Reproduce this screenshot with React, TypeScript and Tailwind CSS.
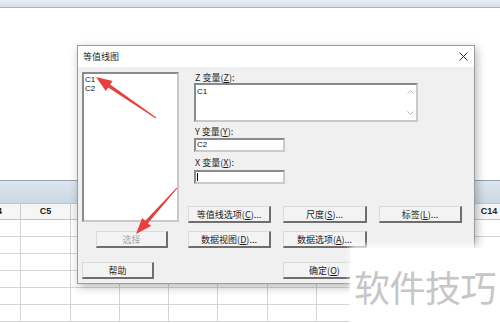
import React from 'react';

const cols = ['C4', 'C5', 'C6', 'C7', 'C8', 'C9', 'C10', 'C11', 'C12', 'C13', 'C14'];
const FONT = { fontFamily: '"Noto Sans CJK SC", "Liberation Sans", sans-serif' };

// mnemonic letter, underlined like a Windows accelerator key
function Key({ k }: { k: string }) {
  return (
    <>
      (<span className="underline underline-offset-1">{k}</span>)
    </>
  );
}

function Btn({
  children,
  w = 'w-[83px]',
  disabled = false,
}: {
  children: React.ReactNode;
  w?: string;
  disabled?: boolean;
}) {
  return (
    <div
      className={`${w} h-[17px] flex items-center justify-center bg-[#f3f3f3] border-t border-l border-[#dadada] border-r-2 border-b-2 border-r-[#6e6e6e] border-b-[#6e6e6e] text-[9px] leading-none ${
        disabled ? 'text-[#a6a6a6]' : 'text-[#1b1b1b]'
      }`}
    >
      {children}
    </div>
  );
}

function Sunken({ className, children }: { className: string; children?: React.ReactNode }) {
  return (
    <div
      className={`bg-white border-2 border-t-[#8a8a8a] border-l-[#8a8a8a] border-b-[#c9c9c9] border-r-[#c9c9c9] ${className}`}
    >
      {children}
    </div>
  );
}

function Sheet() {
  return (
    <div className="flex flex-col w-[500px] h-[323px] bg-white">
      <div className="h-[8px] bg-gradient-to-b from-[#e8eef5] to-[#d6dfea] border-b border-[#a9b4c1]" />
      <div className="h-[172px] bg-white" />
      <div className="h-[23px] bg-gradient-to-b from-[#dde6ef] to-[#cbd7e3] border-t border-[#97a3b1]" />
      <div className="flex ml-[-28px] h-[17px] bg-[#f6f6f6] border-t border-b border-[#c4c4c4]">
        {cols.map(c => (
          <div
            key={c}
            className="w-[49.3px] shrink-0 border-r border-[#cdcdcd] flex items-center justify-center text-[9px] font-bold text-[#222]"
            style={{ fontFamily: '"Liberation Sans", sans-serif' }}
          >
            {c}
          </div>
        ))}
      </div>
      {[0, 1, 2, 3, 4, 5].map(r => (
        <div key={r} className="flex ml-[-28px] h-[17px] border-b border-[#d4d4d4]">
          {cols.map(c => (
            <div key={c} className="w-[49.3px] shrink-0 border-r border-[#d4d4d4]" />
          ))}
        </div>
      ))}
    </div>
  );
}

function Dialog() {
  return (
    <div
      className="absolute left-[77px] top-[45px] w-[398px] h-[239px] flex flex-col border border-[#9c9c9c] bg-[#f0f0f0] shadow-[2px_3px_9px_rgba(0,0,0,0.28)]"
      style={FONT}
    >
      <div className="h-[21px] bg-white flex items-center justify-between pl-[5px] pr-[6px]">
        <span className="text-[9px] leading-none text-[#1e1e1e]">等值线图</span>
        <svg width="9" height="9" viewBox="0 0 9 9">
          <path d="M0.5 0.5 L8.5 8.5 M8.5 0.5 L0.5 8.5" stroke="#333" strokeWidth="1" />
        </svg>
      </div>

      <div className="flex-1 flex pl-[4px] pt-[5px]">
        {/* left: variable list */}
        <div className="w-[97px] flex flex-col">
          <Sunken className="h-[150px] px-[1px] pt-[1px]">
            <div className="text-[8px] leading-[9px] text-[#111]" style={{ fontFamily: '"Liberation Sans", sans-serif' }}>
              <div>C1</div>
              <div>C2</div>
            </div>
          </Sunken>
          <div className="mt-[9px] ml-[14px]">
            <Btn w="w-[72px]" disabled>
              选择
            </Btn>
          </div>
          <div className="mt-[14px]">
            <Btn w="w-[72px]">帮助</Btn>
          </div>
        </div>

        {/* right: fields and option buttons */}
        <div className="ml-[9px] flex flex-col">
          <div className="ml-[7px] h-[11px] text-[9px] leading-[11px] text-[#1e1e1e]">
            Z 变量<Key k="Z" />:
          </div>
          <Sunken className="ml-[6px] w-[224px] h-[39px] flex justify-between">
            <div className="text-[8px] leading-[10px] pl-[1px] pt-[2px] text-[#111]" style={{ fontFamily: '"Liberation Sans", sans-serif' }}>
              C1
            </div>
            <div className="w-[12px] flex flex-col justify-between items-center py-[5px] text-[#b4b4b4]">
              <svg width="7" height="4" viewBox="0 0 7 4">
                <path d="M0.5 3.5 L3.5 0.5 L6.5 3.5" fill="none" stroke="currentColor" />
              </svg>
              <svg width="7" height="4" viewBox="0 0 7 4">
                <path d="M0.5 0.5 L3.5 3.5 L6.5 0.5" fill="none" stroke="currentColor" />
              </svg>
            </div>
          </Sunken>
          <div className="ml-[7px] mt-[4px] h-[12px] text-[9px] leading-[12px] text-[#1e1e1e]">
            Y 变量<Key k="Y" />:
          </div>
          <Sunken className="ml-[6px] w-[91px] h-[14px]">
            <div className="text-[8px] leading-[10px] pl-[1px] text-[#111]" style={{ fontFamily: '"Liberation Sans", sans-serif' }}>
              C2
            </div>
          </Sunken>
          <div className="ml-[7px] mt-[5px] h-[12px] text-[9px] leading-[12px] text-[#1e1e1e]">
            X 变量<Key k="X" />:
          </div>
          <Sunken className="ml-[6px] mt-[1px] w-[91px] h-[14px] pl-[1px] pt-[1px]">
            <div className="w-px h-[8px] bg-black" />
          </Sunken>

          <div className="mt-[22px] flex gap-[12px]">
            <Btn>
              等值线选项<Key k="C" />...
            </Btn>
            <Btn w="w-[84px]">
              尺度<Key k="S" />...
            </Btn>
            <Btn>
              标签<Key k="L" />...
            </Btn>
          </div>
          <div className="mt-[8px] flex gap-[12px]">
            <Btn>
              数据视图<Key k="D" />...
            </Btn>
            <Btn w="w-[84px]">
              数据选项<Key k="A" />...
            </Btn>
          </div>
          <div className="mt-[14px] flex pl-[95px]">
            <Btn w="w-[84px]">
              确定<Key k="O" />
            </Btn>
          </div>
        </div>
      </div>
    </div>
  );
}

function Arrows() {
  return (
    <svg className="absolute left-0 top-0 pointer-events-none" width="500" height="323" viewBox="0 0 500 323">
      <polygon
        fill="#e8413b"
        points="96,77 112.6,81.1 110.2,84.5 156.3,117.6 155.7,118.4 108.2,87.5 105.8,90.9"
      />
      <polygon
        fill="#e8413b"
        points="136,234 142.1,218 145.3,220.8 176.6,187.7 177.4,188.3 147.9,223.2 151.1,226"
      />
    </svg>
  );
}

export default function App() {
  return (
    <div className="relative w-[500px] h-[323px] overflow-hidden bg-white">
      <Sheet />
      <Dialog />
      <Arrows />

      {/* watermark */}
      <div className="absolute left-[350px] top-[248px] w-[150px] h-[75px] bg-white flex items-center pl-[4px] shadow-[0_-3px_6px_rgba(255,255,255,0.9)]">
        <span className="text-[36px] leading-none text-[#c6c6c6] tracking-[-0.5px]" style={FONT}>
          软件技巧
        </span>
      </div>
    </div>
  );
}
